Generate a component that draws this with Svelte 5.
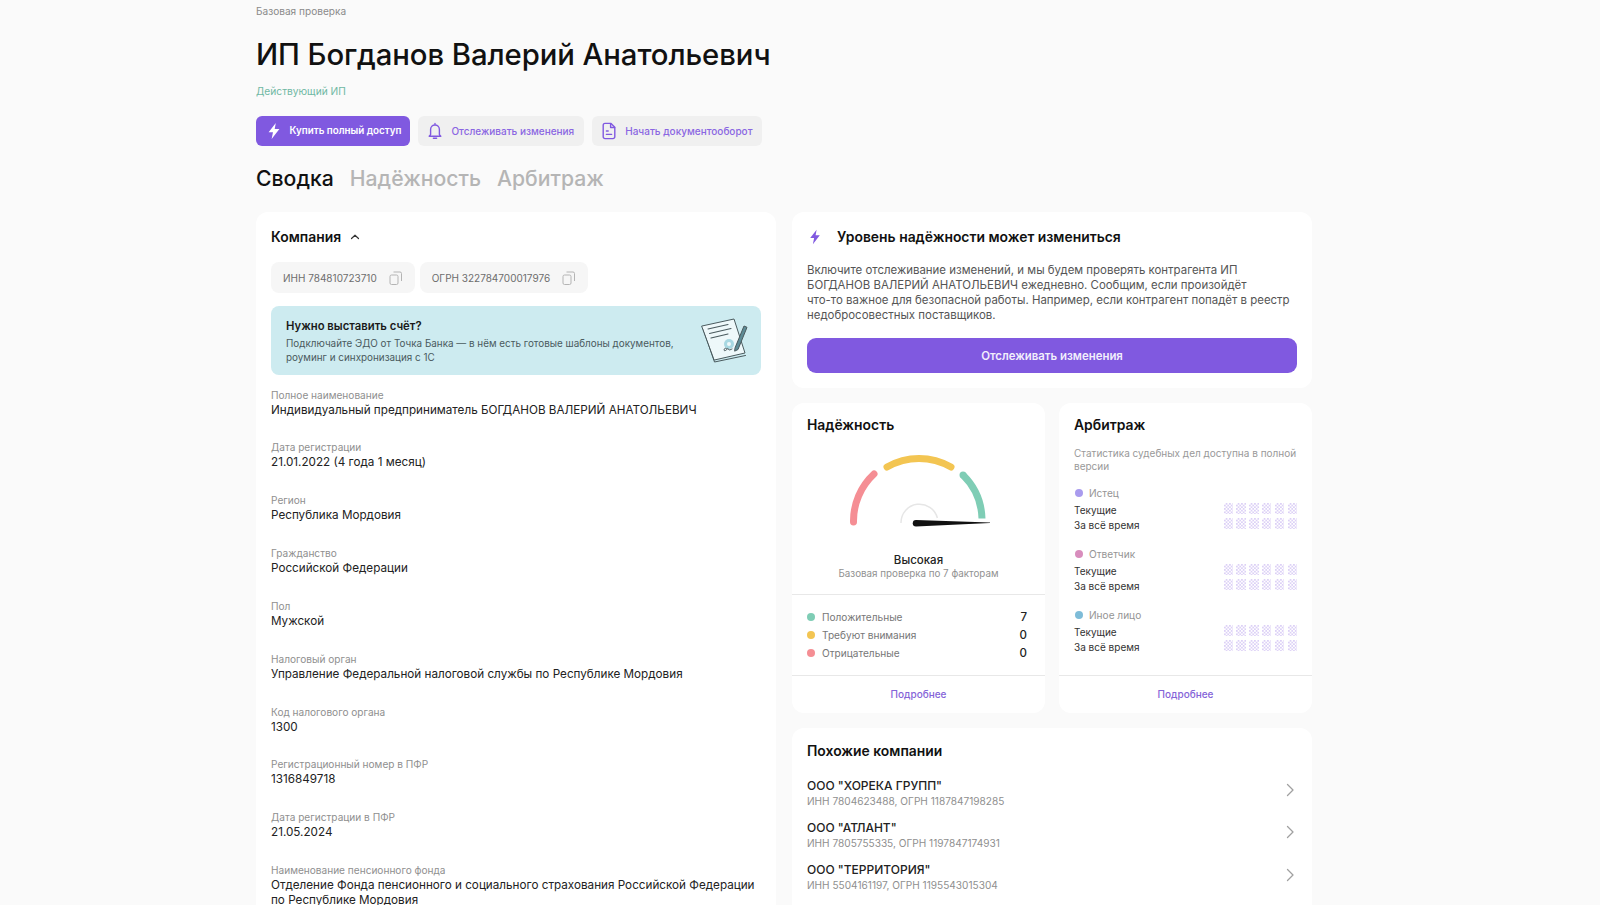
<script>
  const fields = [
    { label: 'Полное наименование', value: 'Индивидуальный предприниматель БОГДАНОВ ВАЛЕРИЙ АНАТОЛЬЕВИЧ' },
    { label: 'Дата регистрации', value: '21.01.2022 (4 года 1 месяц)' },
    { label: 'Регион', value: 'Республика Мордовия' },
    { label: 'Гражданство', value: 'Российской Федерации' },
    { label: 'Пол', value: 'Мужской' },
    { label: 'Налоговый орган', value: 'Управление Федеральной налоговой службы по Республике Мордовия' },
    { label: 'Код налогового органа', value: '1300' },
    { label: 'Регистрационный номер в ПФР', value: '1316849718' },
    { label: 'Дата регистрации в ПФР', value: '21.05.2024' },
    { label: 'Наименование пенсионного фонда', value: 'Отделение Фонда пенсионного и социального страхования Российской Федерации по Республике Мордовия' }
  ];

  const factors = [
    { name: 'Положительные', color: '#7fcdb5', count: 7 },
    { name: 'Требуют внимания', color: '#f3c552', count: 0 },
    { name: 'Отрицательные', color: '#f58e94', count: 0 }
  ];

  const roles = [
    { name: 'Истец', color: '#a99bee' },
    { name: 'Ответчик', color: '#d88dbd' },
    { name: 'Иное лицо', color: '#7ebcd8' }
  ];

  const similar = [
    { name: 'ООО "ХОРЕКА ГРУПП"', ids: 'ИНН 7804623488, ОГРН 1187847198285' },
    { name: 'ООО "АТЛАНТ"', ids: 'ИНН 7805755335, ОГРН 1197847174931' },
    { name: 'ООО "ТЕРРИТОРИЯ"', ids: 'ИНН 5504161197, ОГРН 1195543015304' }
  ];

  const blocks = [0, 1, 2, 3, 4, 5];
</script>

{#snippet bolt(size, color)}
  <svg width={size} height={size} viewBox="0 0 16 16">
    <path d="M9.6 0.8 3.2 9.1h3.9L5.9 15.2l6.9-8.9H8.6z" fill={color} />
  </svg>
{/snippet}

{#snippet copy()}
  <svg class="copy" width="14" height="14" viewBox="0 0 14 14" fill="none" stroke="#b4b4b4" stroke-width="1">
    <rect x="1" y="4" width="8" height="9.5" rx="1.5" />
    <path d="M4.5 1h6.5a1.5 1.5 0 0 1 1.5 1.5V10" />
  </svg>
{/snippet}

{#snippet hidden()}
  <div class="mask">
    {#each blocks as b}<i></i>{/each}
  </div>
{/snippet}

<div class="page">
  <div class="crumb">Базовая проверка</div>
  <h1>ИП Богданов Валерий Анатольевич</h1>
  <div class="status">Действующий ИП</div>

  <div class="actions">
    <button class="act primary">
      {@render bolt(18, '#fff')}
      Купить полный доступ
    </button>
    <button class="act">
      <svg width="18" height="18" viewBox="0 0 18 18" fill="none" stroke="#8059e0" stroke-width="1.4" stroke-linecap="round" stroke-linejoin="round">
        <path d="M9 1.500v1.200M4.600 12.600V7.400a4.400 4.400 0 0 1 8.800 0v5.200l1.400 1.600H3.200z" />
        <path d="M7.400 16.300h3.200" />
      </svg>
      Отслеживать изменения
    </button>
    <button class="act">
      <svg width="18" height="18" viewBox="0 0 18 18" fill="none" stroke="#8059e0" stroke-width="1.4" stroke-linecap="round" stroke-linejoin="round">
        <path d="M3.200 3.200a1.800 1.800 0 0 1 1.800-1.800h6l3.800 3.800v9.600a1.800 1.800 0 0 1-1.800 1.800H5a1.800 1.800 0 0 1-1.800-1.800z" />
        <path d="M10.600 1.600v3.900h4M6.400 9h1.800M6.400 12.400h5.200" />
      </svg>
      Начать документооборот
    </button>
  </div>

  <div class="tabs">
    <span class="tab on">Сводка</span>
    <span class="tab">Надёжность</span>
    <span class="tab">Арбитраж</span>
  </div>

  <div class="columns">
    <section class="card company">
      <div class="head">
        <h2>Компания</h2>
        <svg width="12" height="12" viewBox="0 0 12 12" fill="none" stroke="#333" stroke-width="1.2" stroke-linecap="round" stroke-linejoin="round">
          <path d="M2.500 7.500 6 4.200l3.500 3.300" />
        </svg>
      </div>

      <div class="chips">
        <div class="chip">ИНН 784810723710 {@render copy()}</div>
        <div class="chip">ОГРН 322784700017976 {@render copy()}</div>
      </div>

      <div class="banner">
        <div>
          <div class="banner-title">Нужно выставить счёт?</div>
          <div class="banner-text">Подключайте ЭДО от Точка Банка — в нём есть готовые шаблоны документов, роуминг и синхронизация с 1С</div>
        </div>
        <svg class="doc" width="50" height="46" viewBox="0 0 50 46" fill="none" stroke="#4a5a5e" stroke-width="1" stroke-linejoin="round" stroke-linecap="round">
          <path d="M2 10.500 13.500 44l31-6.500" />
          <path d="M1 8 33 1l11 34-30.500 7z" fill="#eef8fa" />
          <path d="M7 11 27 6.500M8.500 15.500 30 10.500M10 20l17-4" stroke-width="1.1" />
          <circle cx="28" cy="26" r="5" fill="#a8d8e2" stroke="none" />
          <circle cx="28" cy="26" r="2" fill="#eef8fa" stroke="none" />
          <path d="M26 31c-3-3-4 3-1.500 1.500s2-3.500 3-1c.5 1 2.500 0 3.500-.5" />
          <path d="M34 30 43 8l3 1.300L37 31.500l-3 1.500z" fill="#5d8c96" />
        </svg>
      </div>

      <div class="fields">
        {#each fields as f}
          <div class="field">
            <div class="label">{f.label}</div>
            <div class="value">{f.value}</div>
          </div>
        {/each}
      </div>
    </section>

    <div class="side">
      <section class="card notice">
        <div class="head">
          <span class="bolt">{@render bolt(16, '#8059e0')}</span>
          <h2>Уровень надёжности может измениться</h2>
        </div>
        <p>Включите отслеживание изменений, и мы будем проверять контрагента ИП БОГДАНОВ ВАЛЕРИЙ АНАТОЛЬЕВИЧ ежедневно. Сообщим, если произойдёт<br />что-то важное для безопасной работы. Например, если контрагент попадёт в реестр недобросовестных поставщиков.</p>
        <button class="wide">Отслеживать изменения</button>
      </section>

      <div class="pair">
        <section class="card stat">
          <div class="stat-body">
            <h2>Надёжность</h2>
            <svg class="gauge" width="170" height="86" viewBox="0 0 170 86" fill="none">
              <path d="M69 73a18.500 18.500 0 0 1 36.400-5" stroke="#e6e6e6" stroke-width="1.500" />
              <path d="M21.500 72A64 64 0 0 1 42 24" stroke="#f58e94" stroke-width="7" stroke-linecap="round" />
              <path d="M55 17A64 64 0 0 1 119 17" stroke="#f3c552" stroke-width="7" stroke-linecap="round" />
              <path d="M131 25A64 64 0 0 1 150 68.500" stroke="#7fcdb5" stroke-width="7" />
              <circle cx="131" cy="25" r="3.500" fill="#7fcdb5" />
              <path d="M84 70 158 72.500v.5L84 76.500a3.250 3.250 0 0 1 0-6.500z" fill="#111" />
            </svg>
            <div class="level">Высокая</div>
            <div class="level-sub">Базовая проверка по 7 факторам</div>
          </div>
          <div class="factors">
            {#each factors as f}
              <div class="factor">
                <i class="dot" style="background: {f.color}"></i>
                <span>{f.name}</span>
                <b>{f.count}</b>
              </div>
            {/each}
          </div>
          <a class="more" href="#more">Подробнее</a>
        </section>

        <section class="card stat">
          <div class="stat-body arb">
            <h2>Арбитраж</h2>
            <div class="desc">Статистика судебных дел доступна в полной версии</div>
            {#each roles as r}
              <div class="role">
                <div class="role-name"><i class="dot" style="background: {r.color}"></i>{r.name}</div>
                <div class="role-row">Текущие {@render hidden()}</div>
                <div class="role-row">За всё время {@render hidden()}</div>
              </div>
            {/each}
          </div>
          <a class="more" href="#more">Подробнее</a>
        </section>
      </div>

      <section class="card similar">
        <h2>Похожие компании</h2>
        {#each similar as s}
          <div class="sim">
            <div>
              <div class="sim-name">{s.name}</div>
              <div class="sim-ids">{s.ids}</div>
            </div>
            <svg width="14" height="14" viewBox="0 0 14 14" fill="none" stroke="#a0a0a0" stroke-width="1.300" stroke-linecap="round" stroke-linejoin="round">
              <path d="M4.500 1.500 10 7l-5.500 5.500" />
            </svg>
          </div>
        {/each}
      </section>
    </div>
  </div>
</div>

<style>
  :global(body) {
    margin: 0;
    background: #fafafa;
  }
  .page {
    box-sizing: border-box;
    width: 1056px;
    height: 905px;
    margin-left: 256px;
    overflow: hidden;
    font-family: Inter, "Noto Sans", sans-serif;
    color: #1a1a1a;
  }
  .crumb {
    padding-top: 4px;
    font-size: 10.100px;
    line-height: 14px;
    color: #8a8a8a;
  }
  h1 {
    margin: 17px 0 0;
    font-size: 29.300px;
    line-height: 40px;
    font-weight: 550;
    letter-spacing: -0.07px;
    color: #111;
  }
  .status {
    margin-top: 9px;
    font-size: 10.200px;
    line-height: 14px;
    color: #6fb8a3;
  }
  .actions {
    display: flex;
    gap: 8px;
    margin-top: 17.500px;
  }
  .act {
    display: flex;
    align-items: center;
    gap: 7px;
    height: 30px;
    padding: 0 9.500px 0 8.500px;
    border: none;
    border-radius: 6px;
    background: #f0f0f0;
    font: 500 10px Inter, sans-serif;
    color: #8a66e2;
  }
  .act.primary {
    padding-right: 8.500px;
    background: #8059e0;
    color: #fff;
    font-weight: 600;
    font-size: 9.800px;
  }
  .tabs {
    display: flex;
    gap: 16px;
    margin-top: 16.500px;
    font-size: 21.200px;
    line-height: 32px;
    font-weight: 550;
    color: #b5b5b5;
  }
  .tab.on {
    color: #111;
  }
  .columns {
    display: grid;
    grid-template-columns: 520px 520px;
    gap: 16px;
    margin-top: 18px;
  }
  .card {
    background: #fff;
    border-radius: 12px;
  }
  h2 {
    margin: 0;
    font-size: 13.900px;
    line-height: 20px;
    font-weight: 600;
    color: #111;
  }
  .company {
    padding: 15px 15px 24px;
  }
  .head {
    display: flex;
    align-items: center;
    gap: 8px;
  }
  .chips {
    display: flex;
    gap: 5px;
    margin-top: 15px;
  }
  .chip {
    display: flex;
    align-items: center;
    gap: 12px;
    height: 31px;
    padding: 0 12px;
    border-radius: 8px;
    background: #f6f6f6;
    font-size: 10px;
    color: #6d6d6d;
  }
  .banner {
    display: flex;
    justify-content: space-between;
    align-items: center;
    box-sizing: border-box;
    height: 69px;
    margin-top: 13px;
    padding: 0 10px 0 15px;
    border-radius: 8px;
    background: #cdebf0;
  }
  .banner-title {
    font-size: 11.300px;
    line-height: 16px;
    font-weight: 600;
    color: #1a1a1a;
  }
  .banner-text {
    width: 400px;
    margin-top: 2px;
    font-size: 9.900px;
    line-height: 14px;
    color: #4a5a5e;
  }
  .fields {
    display: flex;
    flex-direction: column;
    gap: 22.350px;
    margin-top: 11.500px;
  }
  .label {
    font-size: 10.100px;
    line-height: 16px;
    color: #8f8f8f;
  }
  .value {
    font-size: 11.700px;
    line-height: 14.500px;
    color: #222;
  }
  .side {
    display: flex;
    flex-direction: column;
    gap: 15px;
  }
  .notice {
    padding: 15px;
  }
  .bolt {
    display: flex;
    width: 22px;
  }
  .notice p {
    margin: 16px 0 0;
    font-size: 11.450px;
    line-height: 15px;
    color: #555;
  }
  .wide {
    display: block;
    width: 100%;
    height: 35px;
    margin-top: 15px;
    border: none;
    border-radius: 9px;
    background: #8059e0;
    font: 600 11.400px Inter, sans-serif;
    color: #f2eefc;
  }
  .pair {
    display: grid;
    grid-template-columns: 253px 253px;
    gap: 14px;
  }
  .stat {
    display: flex;
    flex-direction: column;
    height: 309.500px;
  }
  .stat-body {
    padding: 12px 15px 0;
  }
  .stat-body.arb {
    flex: 1;
  }
  .gauge {
    display: block;
    margin: 15px 0 0 25px;
  }
  .level {
    margin-top: 17px;
    text-align: center;
    font-size: 11.500px;
    line-height: 14px;
    font-weight: 500;
    color: #222;
  }
  .level-sub {
    text-align: center;
    font-size: 9.800px;
    line-height: 13px;
    color: #919191;
  }
  .factors {
    flex: 1;
    margin-top: 14px;
    padding: 13px 18px 0 15px;
    border-top: 1px solid #e8e8e8;
  }
  .factor {
    display: flex;
    align-items: center;
    height: 18px;
    font-size: 10.100px;
    color: #777;
  }
  .factor span {
    flex: 1;
  }
  .factor b {
    font-size: 11.500px;
    font-weight: 500;
    color: #222;
  }
  .dot {
    flex: none;
    display: inline-block;
    width: 8px;
    height: 8px;
    margin-right: 7px;
    border-radius: 50%;
  }
  .more {
    display: block;
    height: 37px;
    border-top: 1px solid #e8e8e8;
    text-align: center;
    font-size: 10px;
    font-weight: 500;
    line-height: 36px;
    text-decoration: none;
    color: #8564d8;
  }
  .desc {
    margin: 12px -6px 0 0;
    font-size: 10px;
    line-height: 13px;
    color: #999;
  }
  .role {
    margin-top: 12.500px;
  }
  .role + .role {
    margin-top: 14px;
  }
  .role-name {
    display: flex;
    align-items: center;
    height: 15px;
    font-size: 10.100px;
    color: #959595;
  }
  .role-name .dot {
    margin-left: 1px;
    margin-right: 6px;
  }
  .role-row {
    display: flex;
    justify-content: space-between;
    align-items: center;
    height: 15px;
    font-size: 10px;
    color: #333;
  }
  .role-name + .role-row {
    margin-top: 2px;
  }
  .mask {
    display: flex;
    gap: 3.300px;
    margin-bottom: 4px;
  }
  .mask i {
    width: 9.500px;
    height: 11px;
    background: repeating-conic-gradient(#dcd0f6 0 25%, #fff 0 50%) 0 0 / 3.400px 3.400px;
  }
  .similar {
    height: 240px;
    padding: 13px 15px;
  }
  .sim {
    display: flex;
    justify-content: space-between;
    align-items: center;
    height: 31px;
    margin-bottom: 11.400px;
  }
  .sim svg {
    margin-bottom: 6px;
  }
  .similar h2 {
    margin-bottom: 17px;
  }
  .sim-name {
    font-size: 12px;
    line-height: 16px;
    font-weight: 500;
    color: #222;
  }
  .sim-ids {
    font-size: 10.100px;
    line-height: 15px;
    color: #8f8f8f;
  }
</style>
